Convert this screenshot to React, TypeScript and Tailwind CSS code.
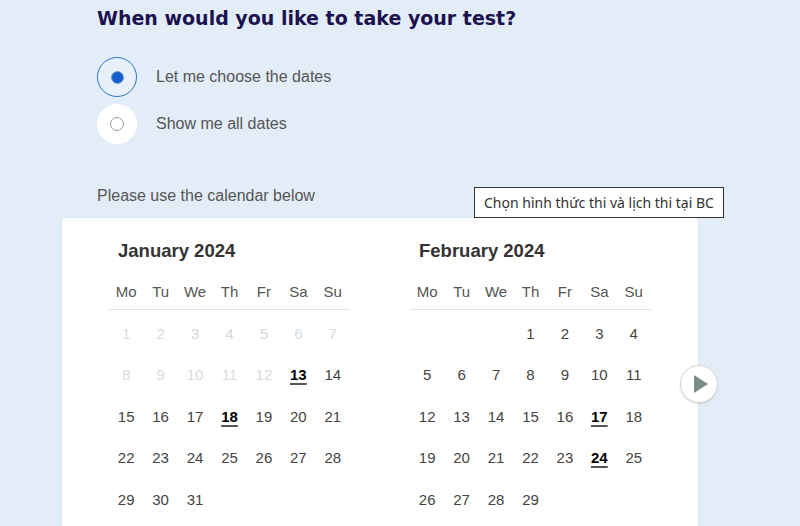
import React from 'react';

type Day = { n: number; off?: boolean; pick?: boolean };

const weekDays = ['Mo', 'Tu', 'We', 'Th', 'Fr', 'Sa', 'Su'];

const buildMonth = (lead: number, total: number, offUntil: number, picks: number[]): (Day | null)[] => {
  const cells: (Day | null)[] = [];
  for (let i = 0; i < lead; i++) cells.push(null);
  for (let d = 1; d <= total; d++) {
    cells.push({ n: d, off: d <= offUntil, pick: picks.includes(d) });
  }
  return cells;
};

const months = [
  { title: 'January 2024', days: buildMonth(0, 31, 12, [13, 18]) },
  { title: 'February 2024', days: buildMonth(3, 29, 0, [17, 24]) },
];

const Month = ({ title, days }: { title: string; days: (Day | null)[] }) => (
  <div className="w-[241px]">
    <h2 className="ml-[9px] text-[18.5px] leading-[24px] font-bold text-[#333]">{title}</h2>
    <div className="mt-[13px] grid grid-cols-7 h-[34px] items-center border-b border-[#dfe2e6]">
      {weekDays.map((w) => (
        <span key={w} className="text-center text-[15px] text-[#555]">{w}</span>
      ))}
    </div>
    <div className="mt-[3px] grid grid-cols-7 auto-rows-[41.5px] items-center">
      {days.map((d, i) =>
        d ? (
          <span
            key={i}
            className={
              d.off
                ? 'text-center text-[15px] text-[#d6dbe0]'
                : d.pick
                ? 'text-center text-[15px] font-bold text-black underline decoration-[#555] decoration-2 underline-offset-[3px]'
                : 'text-center text-[15px] text-[#444]'
            }
          >
            {d.n}
          </span>
        ) : (
          <span key={i} />
        )
      )}
    </div>
  </div>
);

export default function App() {
  return (
    <div className="relative w-[800px] h-[526px] overflow-hidden bg-[#e3edf8] font-['Liberation_Sans',Arial,sans-serif]">
      <div className="pl-[97px] pt-[6px]">
        <h1 className="text-[19px] leading-[24px] font-bold text-[#1d1250] font-['DejaVu_Sans',Verdana,sans-serif]">
          When would you like to take your test?
        </h1>

        <div className="mt-[27px] flex flex-col gap-[7px]">
          <label className="flex items-center gap-[19px]">
            <span className="w-[40px] h-[40px] rounded-full border-[1.5px] border-[#2f74d0] bg-[#e8f0f9] flex items-center justify-center">
              <span className="w-[13px] h-[13px] rounded-full border border-[#6fa0e0] bg-[#1560c8]" />
            </span>
            <span className="text-[16px] text-[#555]">Let me choose the dates</span>
          </label>
          <label className="flex items-center gap-[19px]">
            <span className="w-[40px] h-[40px] rounded-full bg-white flex items-center justify-center">
              <span className="w-[14px] h-[14px] rounded-full border border-[#9a9a9a] bg-white" />
            </span>
            <span className="text-[16px] text-[#555]">Show me all dates</span>
          </label>
        </div>

        <p className="mt-[42px] text-[16px] leading-[20px] text-[#555]">Please use the calendar below</p>
      </div>

      <div className="relative mt-[12px] ml-[62px] w-[636px] h-[320px] bg-white rounded-t-[4px] shadow-[0_0_3px_rgba(0,0,0,0.06)]">
        <div className="flex gap-[60px] pl-[47px] pt-[21px]">
          {months.map((m) => (
            <Month key={m.title} title={m.title} days={m.days} />
          ))}
        </div>

        <button className="absolute right-[-20px] top-[147px] w-[38px] h-[38px] rounded-full bg-white border border-[#d4d7da] shadow-[0_1px_2px_rgba(0,0,0,0.12)] flex items-center justify-center">
          <svg width="16" height="20" viewBox="0 0 16 20" className="ml-[3px]">
            <path d="M1 1 L15 10 L1 19 Z" fill="#7c8b89" />
          </svg>
        </button>
      </div>

      <div className="absolute left-[474px] top-[187px] w-[250px] h-[31px] border border-[#333] bg-white flex items-center pl-[9px] text-[14px] text-[#333] font-['Noto_Sans','Open_Sans',sans-serif]">
        Chọn hình thức thi và lịch thi tại BC
      </div>
    </div>
  );
}
